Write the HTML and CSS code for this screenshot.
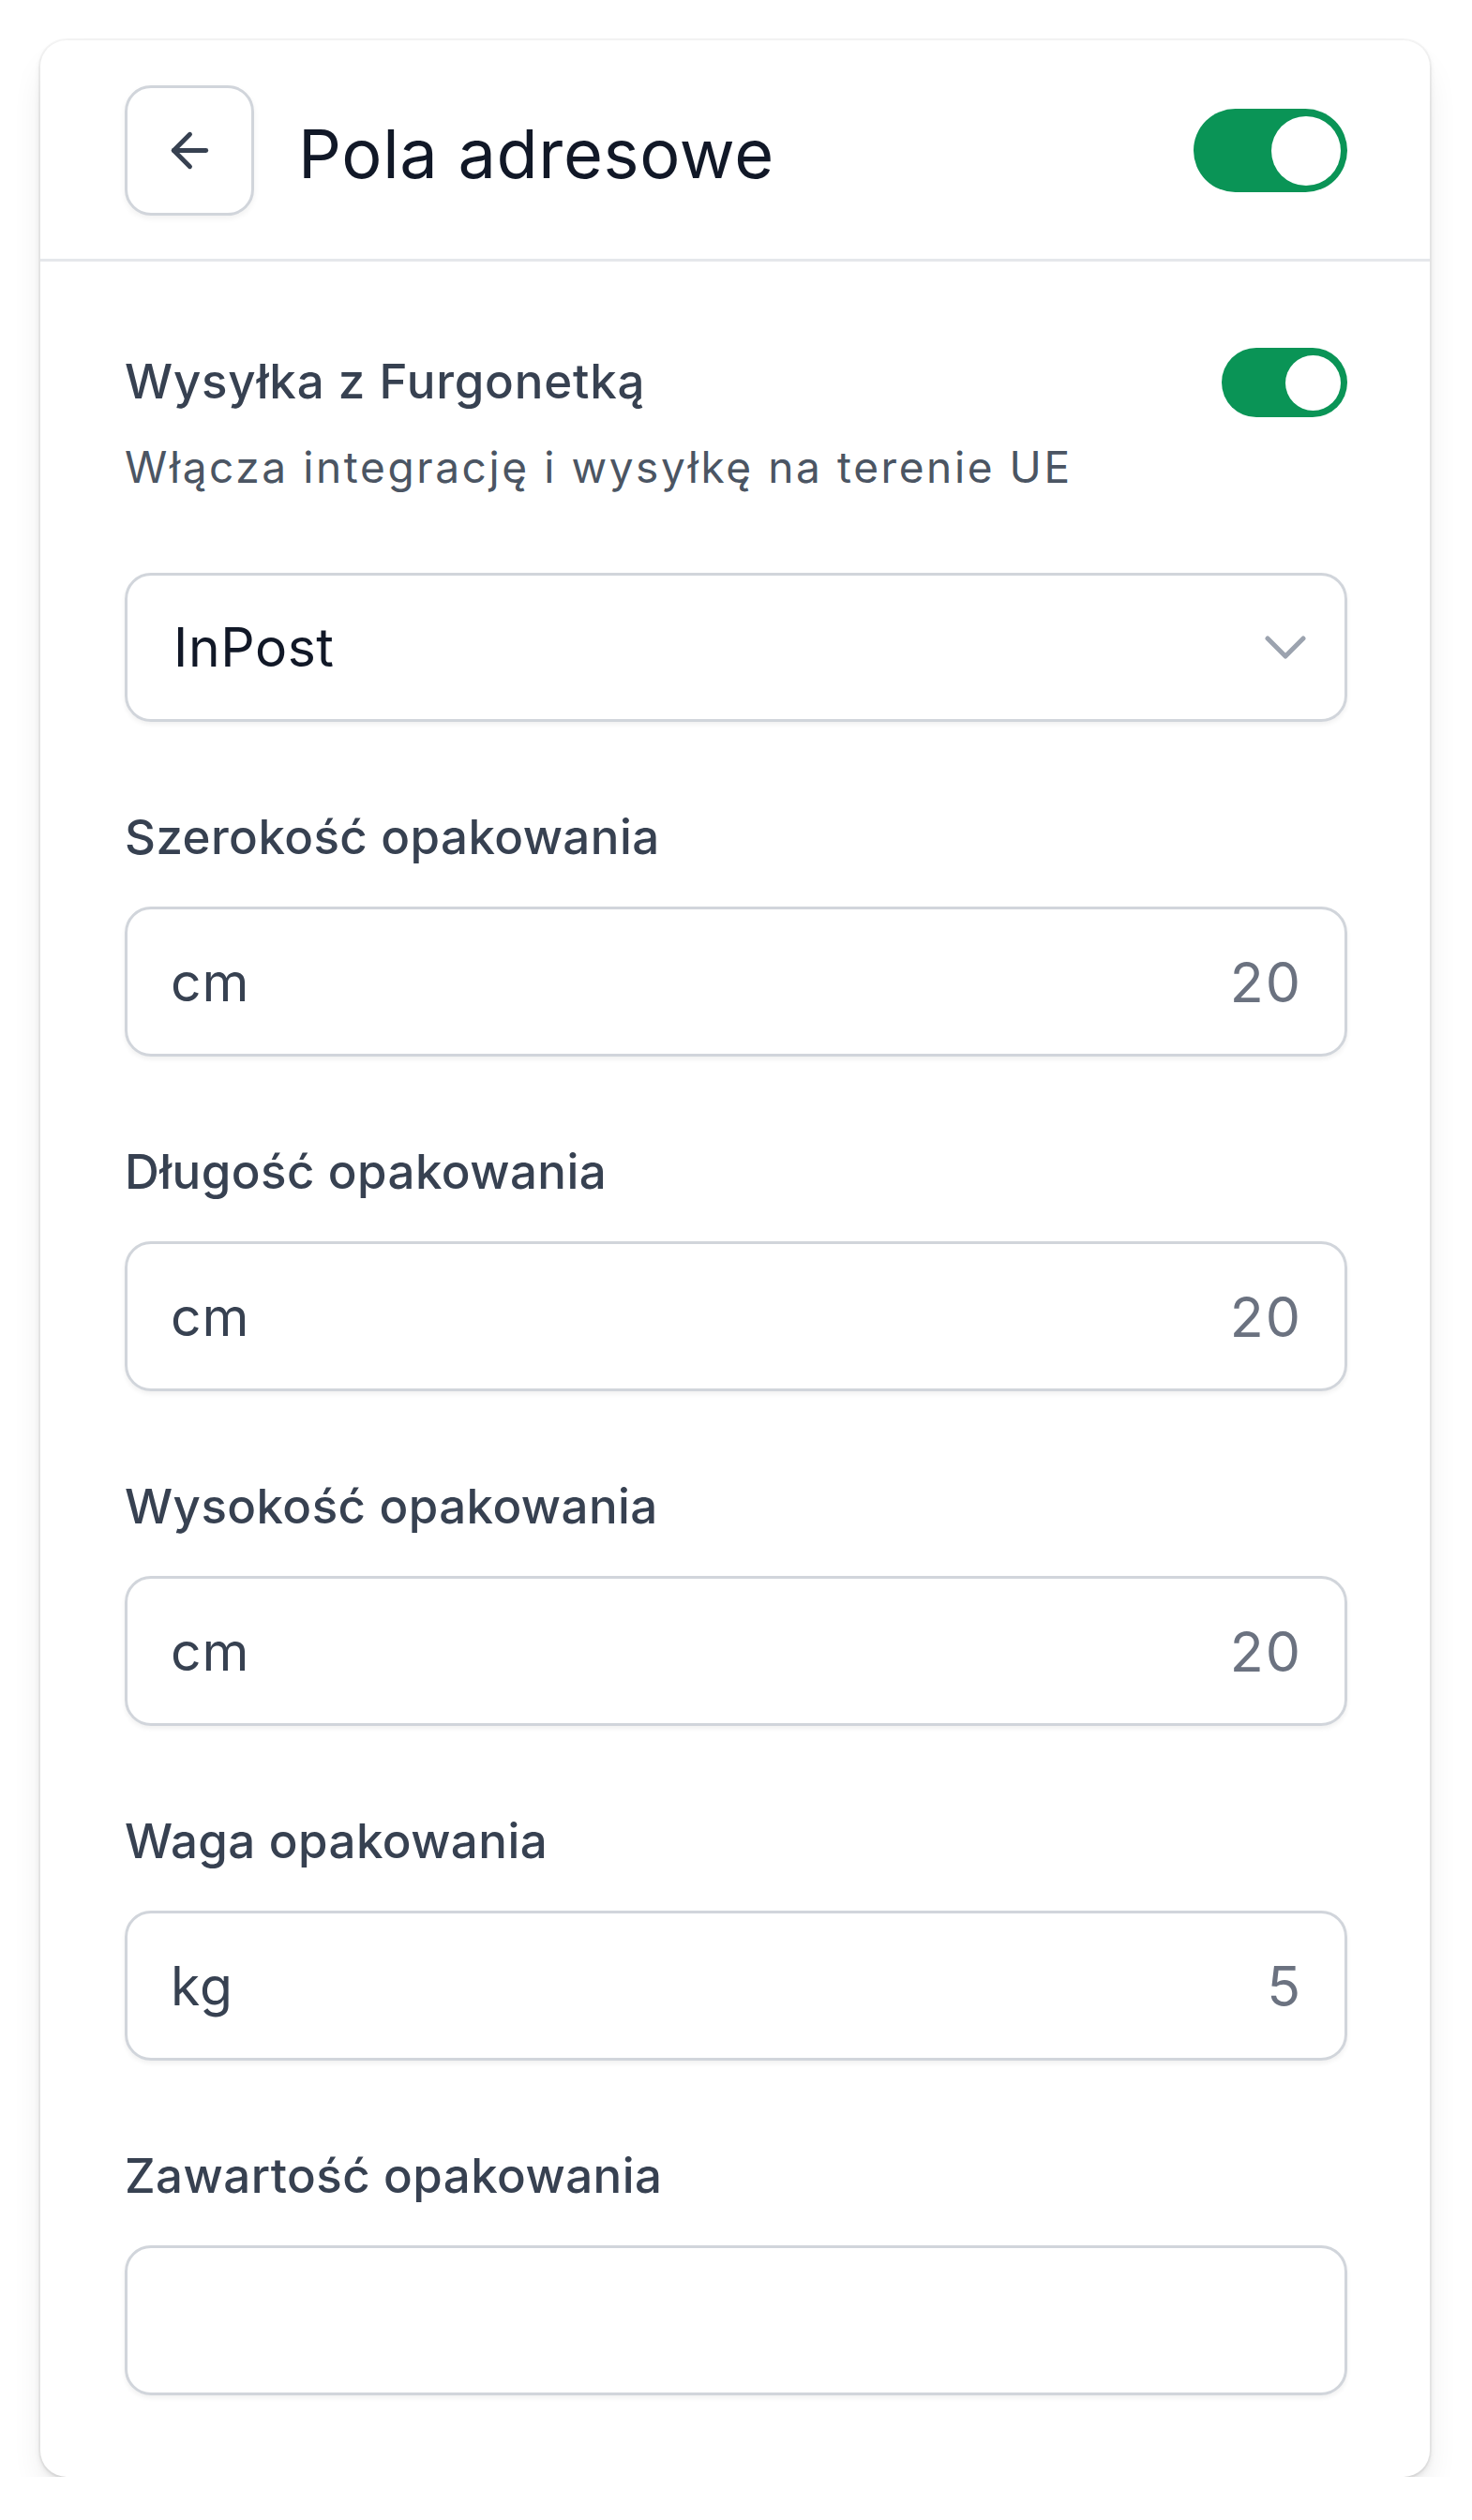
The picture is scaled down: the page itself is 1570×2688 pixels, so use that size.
FILE: index.html
```html
<!DOCTYPE html>
<html lang="pl">
<head>
<meta charset="utf-8">
<title>Pola adresowe</title>
<link rel="stylesheet" href="styles.css">
</head>
<body>
<div class="card">
  <header class="card-header">
    <button class="back-btn" type="button" aria-label="Wstecz">
      <svg class="back-icon" viewBox="0 0 24 24" fill="none" stroke="currentColor" stroke-width="2" stroke-linecap="round" stroke-linejoin="round"><path d="m12 19-7-7 7-7"/><path d="M19 12H5"/></svg>
    </button>
    <h1 class="title">Pola adresowe</h1>
    <span class="toggle toggle-lg"><span class="knob"></span></span>
  </header>
  <div class="card-body">
    <div class="intro">
      <div class="intro-row">
        <div class="intro-title">Wysyłka z Furgonetką</div>
        <span class="toggle toggle-sm"><span class="knob"></span></span>
      </div>
      <div class="intro-sub">Włącza integrację i wysyłkę na terenie UE</div>
    </div>
    <div class="select">
      <span class="select-value">InPost</span>
      <svg class="chevron" width="44" height="26" viewBox="0 0 44 26" fill="none" stroke="currentColor" stroke-width="5" stroke-linecap="round" stroke-linejoin="round"><path d="M3 3 L22 22 L41 3"/></svg>
    </div>
    <div class="field">
      <div class="label">Szerokość opakowania</div>
      <div class="input"><span class="unit">cm</span><span class="value">20</span></div>
    </div>
    <div class="field">
      <div class="label">Długość opakowania</div>
      <div class="input"><span class="unit">cm</span><span class="value">20</span></div>
    </div>
    <div class="field">
      <div class="label">Wysokość opakowania</div>
      <div class="input"><span class="unit">cm</span><span class="value">20</span></div>
    </div>
    <div class="field">
      <div class="label">Waga opakowania</div>
      <div class="input"><span class="unit">kg</span><span class="value">5</span></div>
    </div>
    <div class="field">
      <div class="label">Zawartość opakowania</div>
      <div class="input"></div>
    </div>
  </div>
</div>
</body>
</html>
```
FILE: styles.css
```css
* { box-sizing: border-box; }
html, body { margin: 0; padding: 0; background: #ffffff; }
body {
  font-family: Inter, "Noto Sans", "Liberation Sans", sans-serif;
  color: #111827;
  padding: 43px 45px 0 43px;
}
.card {
  width: 1482px;
  background: #ffffff;
  border-radius: 28px;
  box-shadow: 0 0 0 2px rgba(0,0,0,0.035), 0 3px 6px rgba(0,0,0,0.10), 0 22px 40px -12px rgba(0,0,0,0.14);
  overflow: hidden;
}
.card-header {
  display: flex;
  align-items: center;
  padding: 48px 88px 46px 90px;
  border-bottom: 3px solid #e5e7eb;
}
.back-btn {
  width: 138px;
  height: 139px;
  flex: none;
  display: flex;
  align-items: center;
  justify-content: center;
  background: #ffffff;
  border: 3px solid #d1d5db;
  border-radius: 28px;
  box-shadow: 0 3px 6px rgba(0,0,0,0.06);
  color: #374151;
  padding: 0;
}
.back-icon { width: 59px; height: 59px; display: block; }
.title {
  margin: 8px 0 0 47px;
  flex: 1;
  font-size: 72px;
  font-weight: 400;
  line-height: 1.2;
  color: #111827;
  letter-spacing: 0.7px;
}
.toggle {
  flex: none;
  display: flex;
  align-items: center;
  justify-content: flex-end;
  background: #0a9456;
  border-radius: 999px;
}
.toggle .knob {
  display: block;
  background: #ffffff;
  border-radius: 50%;
}
.toggle-lg { width: 164px; height: 89px; padding-right: 7px; }
.toggle-lg .knob { width: 74px; height: 74px; }
.toggle-sm { width: 134px; height: 74px; padding-right: 7px; }
.toggle-sm .knob { width: 59px; height: 59px; }

.card-body {
  padding: 92px 88px 87px 90px;
  display: flex;
  flex-direction: column;
}
.intro-row {
  display: flex;
  justify-content: space-between;
  align-items: flex-start;
}
.intro-title {
  font-size: 51px;
  font-weight: 500;
  line-height: 72px;
  color: #374151;
  letter-spacing: 0.8px;
}
.intro-sub {
  margin-top: 19px;
  font-size: 46px;
  line-height: 69px;
  color: #4b5563;
  letter-spacing: 2.6px;
}
.select {
  margin-top: 78px;
  height: 159px;
  border: 3px solid #d1d5db;
  border-radius: 28px;
  box-shadow: 0 3px 5px rgba(0,0,0,0.06);
  display: flex;
  align-items: center;
  justify-content: space-between;
  padding: 0 41px 0 49px;
}
.select-value { font-size: 57px; color: #111827; letter-spacing: 0.6px; }
.chevron { color: #9ca3af; display: block; }
.field { margin-top: 87px; }
.label {
  font-size: 51px;
  font-weight: 500;
  line-height: 72px;
  color: #374151;
  letter-spacing: 0.45px;
}
.input {
  margin-top: 38px;
  height: 160px;
  border: 3px solid #d1d5db;
  border-radius: 28px;
  box-shadow: 0 3px 5px rgba(0,0,0,0.06);
  display: flex;
  align-items: center;
  justify-content: space-between;
  padding: 0 47px 0 46px;
  font-size: 57px;
}
.unit { color: #374151; letter-spacing: 1px; }
.value { color: #6b7280; font-size: 59px; letter-spacing: 2px; margin-right: -2px; }
```
